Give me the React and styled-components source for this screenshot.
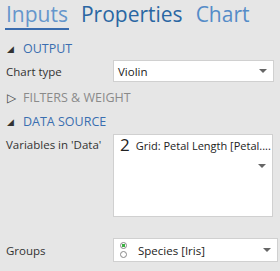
import React from 'react';
import styled, { createGlobalStyle } from 'styled-components';

const GlobalStyle = createGlobalStyle`
  html, body {
    margin: 0;
    padding: 0;
    background: #e6e6e6;
  }
  body {
    font-family: "Open Sans", "Noto Sans", sans-serif;
    color: #333;
  }
`;

const Panel = styled.div`
  width: 280px;
  height: 271px;
  background: #e6e6e6;
  overflow: hidden;
  box-sizing: border-box;
  padding: 0 0 0 5px;
`;

const Tabs = styled.div`
  display: flex;
  gap: 11px;
  height: 32px;
  align-items: flex-start;
`;

const Tab = styled.div`
  font-size: 21px;
  line-height: 28px;
  padding: 0 1px;
  color: ${p => p.$color};
  border-bottom: ${p => (p.$active ? '2px solid #3a6cae' : '2px solid transparent')};
`;

const SectionHeader = styled.div`
  display: flex;
  align-items: center;
  height: 23px;
  padding-left: 2px;
  font-size: 12.5px;
  color: ${p => (p.$open ? '#3a6eb0' : '#8a8a8a')};
  gap: 8px;
  margin-top: ${p => p.$mt || 0}px;
`;

const Caret = styled.span`
  display: inline-block;
  width: 8px;
  font-size: ${p => (p.$open ? '9px' : '12px')};
  line-height: 1;
  color: ${p => (p.$open ? '#333' : '#444')};
`;

const Row = styled.div`
  display: flex;
  align-items: ${p => (p.$top ? 'flex-start' : 'center')};
  padding-left: 1px;
  margin-top: ${p => p.$mt || 0}px;
`;

const Label = styled.div`
  width: 107px;
  font-size: 11.5px;
  color: #333;
  padding-top: ${p => (p.$top ? '3px' : '0')};
`;

const Box = styled.div`
  position: relative;
  box-sizing: border-box;
  width: ${p => p.$width}px;
  height: ${p => p.$height}px;
  background: #fff;
  border: 1px solid #d0d0d0;
  display: flex;
  align-items: ${p => (p.$top ? 'flex-start' : 'center')};
  padding-left: 4px;
  font-size: 11.5px;
  color: #222;
`;

const Arrow = styled.span`
  position: absolute;
  right: 6px;
  top: ${p => p.$top}px;
  width: 0;
  height: 0;
  border-left: 4px solid transparent;
  border-right: 4px solid transparent;
  border-top: 4px solid #666;
`;

const Count = styled.span`
  font-size: 17px;
  line-height: 20px;
  margin: 0 6px 0 2px;
  color: #222;
`;

const ItemText = styled.span`
  font-size: 11px;
  line-height: 21px;
  white-space: nowrap;
`;

const Radios = styled.div`
  display: flex;
  flex-direction: column;
  gap: 2px;
  margin: 0 11px 0 2px;
`;

const Radio = styled.span`
  box-sizing: border-box;
  width: 7px;
  height: 7px;
  border-radius: 50%;
  border: 1px solid #888;
  background: ${p => (p.$on ? 'radial-gradient(circle, #3cb043 0 1.5px, #fff 2px)' : '#fff')};
`;

export default function App() {
  return (
    <>
      <GlobalStyle />
      <Panel>
        <Tabs>
          <Tab $active $color="#6596cc">Inputs</Tab>
          <Tab $color="#2a67a3">Properties</Tab>
          <Tab $color="#558cc8">Chart</Tab>
        </Tabs>
        <SectionHeader $open $mt={5}>
          <Caret $open>◢</Caret>OUTPUT
        </SectionHeader>
        <Row>
          <Label>Chart type</Label>
          <Box $width={161} $height={22}>
            Violin
            <Arrow $top={8} />
          </Box>
        </Row>
        <SectionHeader $mt={4}>
          <Caret>▷</Caret>FILTERS &amp; WEIGHT
        </SectionHeader>
        <SectionHeader $open $mt={1}>
          <Caret $open>◢</Caret>DATA SOURCE
        </SectionHeader>
        <Row $top $mt={1}>
          <Label $top>Variables in 'Data'</Label>
          <Box $width={160} $height={83} $top>
            <Count>2</Count>
            <ItemText>Grid: Petal Length [Petal....</ItemText>
            <Arrow $top={29} />
          </Box>
        </Row>
        <Row $mt={21}>
          <Label>Groups</Label>
          <Box $width={165} $height={24}>
            <Radios>
              <Radio $on />
              <Radio />
            </Radios>
            Species [Iris]
            <Arrow $top={9} />
          </Box>
        </Row>
      </Panel>
    </>
  );
}
